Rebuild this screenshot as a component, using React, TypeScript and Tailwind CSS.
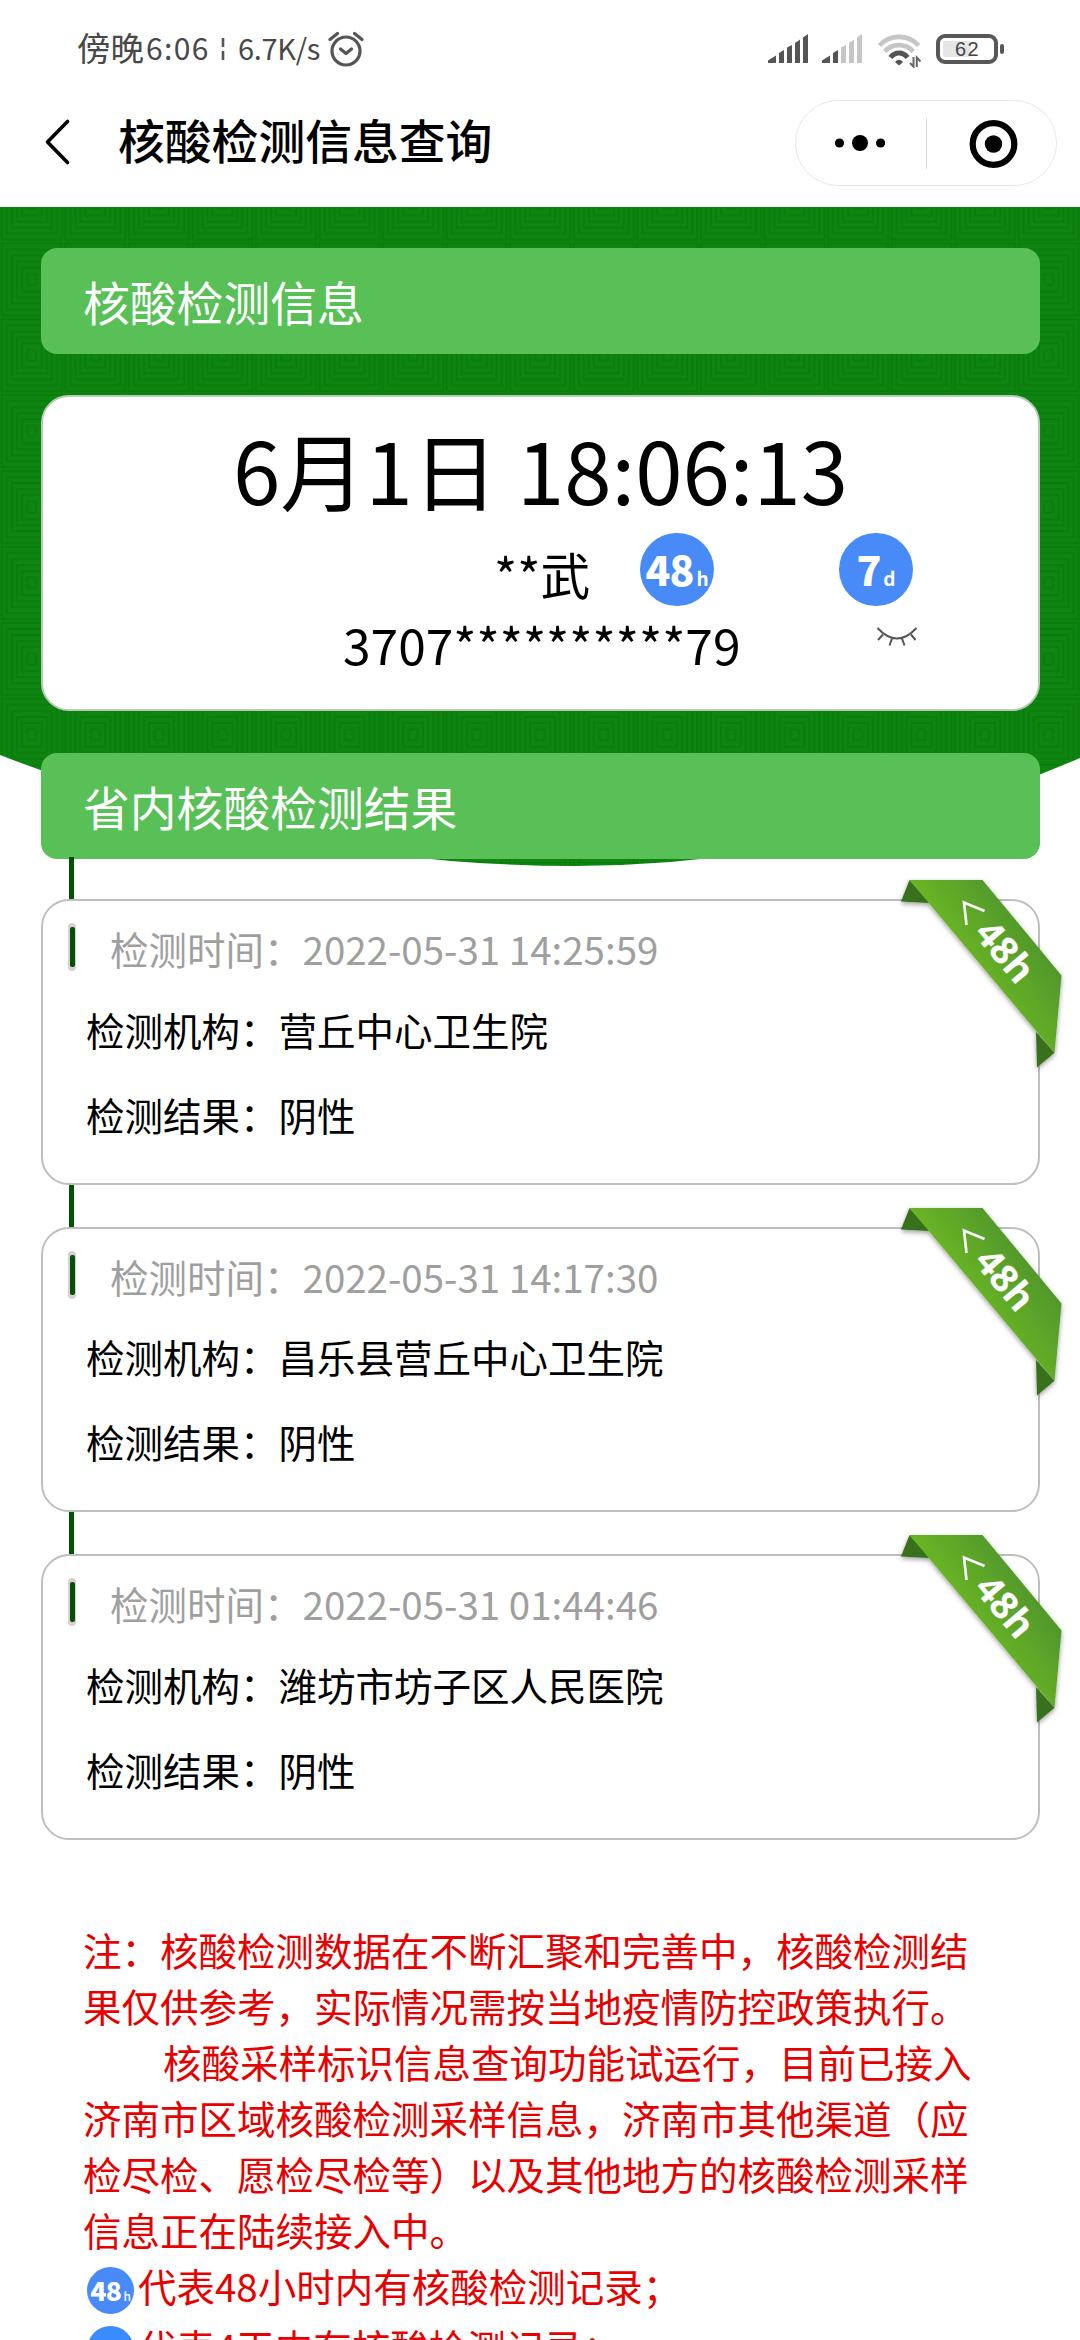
import React from "react";

const records = [
  { time: "2022-05-31 14:25:59", org: "营丘中心卫生院", result: "阴性" },
  { time: "2022-05-31 14:17:30", org: "昌乐县营丘中心卫生院", result: "阴性" },
  { time: "2022-05-31 01:44:46", org: "潍坊市坊子区人民医院", result: "阴性" },
];

function Signal({ level }: { level: number }) {
  const bars = [
    "M0 29V26.5L8 21.5V29Z",
    "M11 29V19L16 16V29Z",
    "M19 29V13.5L24 11V29Z",
    "M27 29V9L32 5.5V29Z",
    "M35 29V3.5L40 0V29Z",
  ];
  return (
    <svg width="40" height="29" viewBox="0 0 40 29">
      {bars.map((d, i) => (
        <path key={d} d={d} fill={i < level ? "#555555" : "#c6c6c6"} />
      ))}
    </svg>
  );
}

function StatusBar() {
  return (
    <div className="flex h-[100px] items-start pl-[77px] text-[#484848]">
      <div className="flex h-[98px] items-center whitespace-nowrap">
        <span className="w-[69px] pb-[3px] text-[33.5px]">傍晚</span>
        <span className="w-[75px] pb-[3px] text-[30px] tracking-[1.4px]">6:06</span>
        <svg width="4" height="24" viewBox="0 0 4 24" className="mr-[13px]">
          <path d="M2 1V10M2 14V23" stroke="#555" strokeWidth="2.6" />
        </svg>
        <span className="w-[90px] pb-[3px] text-[29px] tracking-[-0.3px]">6.7K/s</span>
        <svg width="36" height="36" viewBox="0 0 36 36" fill="none" stroke="#555" strokeWidth="3.2" strokeLinecap="round" strokeLinejoin="round">
          <circle cx="18" cy="20" r="14" />
          <path d="M12.500 18L18 22.500L23.500 18M2 8.500L9.500 2.500M34 8.500L26.500 2.500" />
        </svg>
      </div>
      <div className="ml-auto flex items-start pt-[34px] pr-[76px]">
        <Signal level={5} />
        <span className="w-[14px]" />
        <Signal level={2} />
        <svg className="ml-4" width="43" height="34" viewBox="0 0 43 34" fill="none" strokeWidth="4.6">
          <path d="M1.500 11.500C12 0 30 0 40.500 11.500" stroke="#c6c6c6" />
          <path d="M6.800 17.500C14 9 28 9 35.200 17.500" stroke="#c6c6c6" />
          <path d="M12.500 23.500C17 17.500 25 17.500 29.500 23.500" stroke="#555" strokeWidth="5" />
          <path d="M17 28Q21 23.500 25 28L21 31.500Z" fill="#555" />
          <path d="M35.500 23V32.500L32 29M38.800 33V23.500L42.500 27.500" stroke="#666" strokeWidth="2" />
        </svg>
        <div className="ml-[15px] flex h-[30px] w-[62px] items-center rounded-[9px] border-4 border-[#585858] p-[3px]">
          <div className="flex h-4 w-7 items-center rounded-[2px] bg-[#e6e6e6]">
            <span className="ml-3 font-['Liberation_Sans'] text-[20px] tracking-[1.5px] text-[#444]">62</span>
          </div>
        </div>
        <div className="mt-[10px] ml-[2px] h-[10px] w-[4px] rounded-[2px] bg-[#585858]" />
      </div>
    </div>
  );
}

function NavBar() {
  return (
    <div className="flex h-[107px] items-start pr-[23px] pl-[44px]">
      <svg className="mt-[18px]" width="28" height="48" viewBox="0 0 28 48" fill="none" stroke="#000" strokeWidth="3.6" strokeLinecap="round" strokeLinejoin="round">
        <path d="M23.500 3.500L3.500 24L23.500 44.500" />
      </svg>
      <h1 className="mt-[3px] ml-[46px] text-[46.8px] leading-[72px] font-medium text-black">核酸检测信息查询</h1>
      <div className="ml-auto flex h-[86px] w-[262px] items-center rounded-full border border-[#e8e8e8]">
        <svg width="130" height="40" viewBox="0 0 130 40">
          <circle cx="43.500" cy="20" r="4.600" />
          <circle cx="64" cy="20" r="8" />
          <circle cx="84.600" cy="20" r="4.600" />
        </svg>
        <div className="h-[51px] w-px bg-[#dcdcdc]" />
        <svg className="ml-[41px]" width="50" height="50" viewBox="0 0 50 50">
          <circle cx="25.500" cy="26" r="20.800" fill="none" stroke="#000" strokeWidth="6.200" />
          <circle cx="25.500" cy="26" r="8.700" />
        </svg>
      </div>
    </div>
  );
}

function HeroBackground() {
  return (
    <svg className="absolute top-0 left-0 -z-10" width="1080" height="662" viewBox="0 0 1080 662">
      <defs>
        <pattern id="maze" width="63.55" height="75.900" x="0" y="34.500" patternUnits="userSpaceOnUse">
          <rect width="63.55" height="75.900" fill="#0f8511" />
          <g fill="none" stroke="#0a7d0c" strokeWidth="2">
            <rect x="1.800" y="2" width="60" height="72" />
            <rect x="6.800" y="8" width="50" height="60" />
            <rect x="11.800" y="14" width="40" height="48" />
            <rect x="16.800" y="20" width="30" height="36" />
            <rect x="21.800" y="26" width="20" height="24" />
            <rect x="27.300" y="32.500" width="9" height="11" rx="2" />
          </g>
        </pattern>
      </defs>
      <path d="M0 0H1080V551Q827.500 659 575 659Q287.500 659 0 548Z" fill="url(#maze)" />
    </svg>
  );
}

function Banner({ children }: { children: React.ReactNode }) {
  return (
    <h2 className="flex h-[105.5px] items-center rounded-[16px] bg-[#58c057] pl-[42px] text-[46.8px] text-white">
      <span className="pt-[1px]">{children}</span>
    </h2>
  );
}

function BlueBadge({ value, unit }: { value: string; unit: string }) {
  return (
    <div className="flex h-[73px] w-[74px] items-baseline justify-center rounded-full bg-[#478af8] leading-[71px] text-white">
      <span className="text-[41px] font-black tracking-[-1px]">{value}</span>
      <span className="ml-[3px] text-[19px] font-bold">{unit}</span>
    </div>
  );
}

function SmallBadge({ value, unit, className }: { value: string; unit: string; className: string }) {
  return (
    <span className={`flex h-[47px] w-[47px] shrink-0 items-baseline justify-center rounded-full leading-[46px] text-white ${className}`}>
      <span className="text-[26.5px] font-black tracking-[-0.5px]">{value}</span>
      <span className="ml-[2px] text-[12px] font-medium">{unit}</span>
    </span>
  );
}

function ClosedEye() {
  return (
    <svg width="42" height="20" viewBox="0 0 42 20" fill="none" stroke="#555" strokeWidth="2">
      <path d="M1.500 1Q21 22 40.500 1M7 7.500L2 13M16 11.500L13.500 18.500M26 11.500L28.500 18.500M35 7.500L39.500 13" />
    </svg>
  );
}

function Ribbon() {
  return (
    <svg className="absolute -top-[26px] right-[-32px]" width="174" height="200" viewBox="896 875 174 200">
      <defs>
        <linearGradient id="ribbon" gradientUnits="userSpaceOnUse" x1="965" y1="965" x2="1022" y2="925">
          <stop offset="0.1" stopColor="#69b325" />
          <stop offset="1" stopColor="#52992c" />
        </linearGradient>
        <filter id="shade" x="-20%" y="-20%" width="140%" height="140%">
          <feDropShadow dx="0" dy="2" stdDeviation="2.500" floodOpacity="0.4" />
        </filter>
      </defs>
      <g filter="url(#shade)">
        <path d="M909.500 880L901 901.500L930 903Z" fill="#37701f" />
        <path d="M1036 1032L1054.500 1052.700L1037 1067.500Z" fill="#37701f" />
        <path d="M909.500 880L982.500 880L1061.500 975.500L1054.500 1052.700Z" fill="url(#ribbon)" />
      </g>
      <path d="M984.500 911L964 902.500L966.500 925" fill="none" stroke="#fff" strokeWidth="2.600" />
      <text transform="translate(973 934) rotate(50)" fill="#fff" fontFamily="Noto Sans" fontWeight="700" fontSize="38">48h</text>
    </svg>
  );
}

function RecordCard({ time, org, result }: (typeof records)[number]) {
  return (
    <>
      <div className="ml-[28px] h-[42px] w-[5px] bg-[#005205]" />
      <article className="relative h-[285.5px] rounded-[28px] border-2 border-[#bfbfbf] bg-white text-[38.5px] text-black">
        <div className="flex pt-[19px] pl-[25px] leading-[56px] text-[#9f9f9f]">
          <div className="mt-[3px] mr-[34px] h-[48px] w-[8px] rounded-[4px] bg-[#dccdd0] px-[1.5px] py-[4px]">
            <div className="h-full rounded-[2px] bg-[#005205]" />
          </div>
          <span>检测时间：{time}</span>
        </div>
        <div className="mt-[24.5px] pl-[43px] leading-[56px]">检测机构：{org}</div>
        <div className="mt-[29px] pl-[43px] leading-[56px]">检测结果：{result}</div>
        <Ribbon />
      </article>
    </>
  );
}

export default function App() {
  return (
    <div className="h-[2340px] w-[1080px] overflow-hidden bg-white font-['Noto_Sans_CJK_SC',sans-serif]">
      <StatusBar />
      <NavBar />
      <main className="relative isolate px-[41px] pt-[41px] pr-10">
        <HeroBackground />
        <Banner>核酸检测信息</Banner>
        <section className="mt-[41.5px] mb-[42px] h-[316px] rounded-[28px] border-2 border-[#b7cbb7] bg-white text-black">
          <div className="pt-[17px] text-center text-[85.2px] leading-[108px] whitespace-pre">6月1日 18:06:13</div>
          <div className="mt-[11px] grid h-[73px] grid-cols-[451px_146px_199px_1fr] grid-rows-[73px] items-start text-[49.7px] leading-[73px]">
            <span />
            <span className="pt-[4px]">**武</span>
            <BlueBadge value="48" unit="h" />
            <BlueBadge value="7" unit="d" />
          </div>
          <div className="mt-[1px] flex items-start pl-[300px] text-[49.7px] leading-[72px]">
            <span className="w-[533px]">3707**********79</span>
            <span className="pt-[20px]">
              <ClosedEye />
            </span>
          </div>
        </section>
        <Banner>省内核酸检测结果</Banner>
        <div className="-mt-[1.5px]">
          {records.map((r) => (
            <RecordCard key={r.time} {...r} />
          ))}
        </div>
        <section className="pt-[81.5px] pl-[42px] text-[38.5px] leading-[56px] whitespace-nowrap text-[#e60000]">
          <p>注：核酸检测数据在不断汇聚和完善中，核酸检测结</p>
          <p>果仅供参考，实际情况需按当地疫情防控政策执行。</p>
          <p className="pl-[80px]">核酸采样标识信息查询功能试运行，目前已接入</p>
          <p>济南市区域核酸检测采样信息，济南市其他渠道（应</p>
          <p>检尽检、愿检尽检等）以及其他地方的核酸检测采样</p>
          <p>信息正在陆续接入中。</p>
          <div className="flex h-[61px] items-start pl-1">
            <SmallBadge value="48" unit="h" className="mt-[10px] bg-[#478af8]" />
            <span className="ml-1">代表48小时内有核酸检测记录；</span>
          </div>
          <div className="flex items-start pl-1">
            <SmallBadge value="4" unit="d" className="mt-[8px] bg-[#3a8bff]" />
            <span className="ml-1">代表4天内有核酸检测记录；</span>
          </div>
        </section>
      </main>
    </div>
  );
}
